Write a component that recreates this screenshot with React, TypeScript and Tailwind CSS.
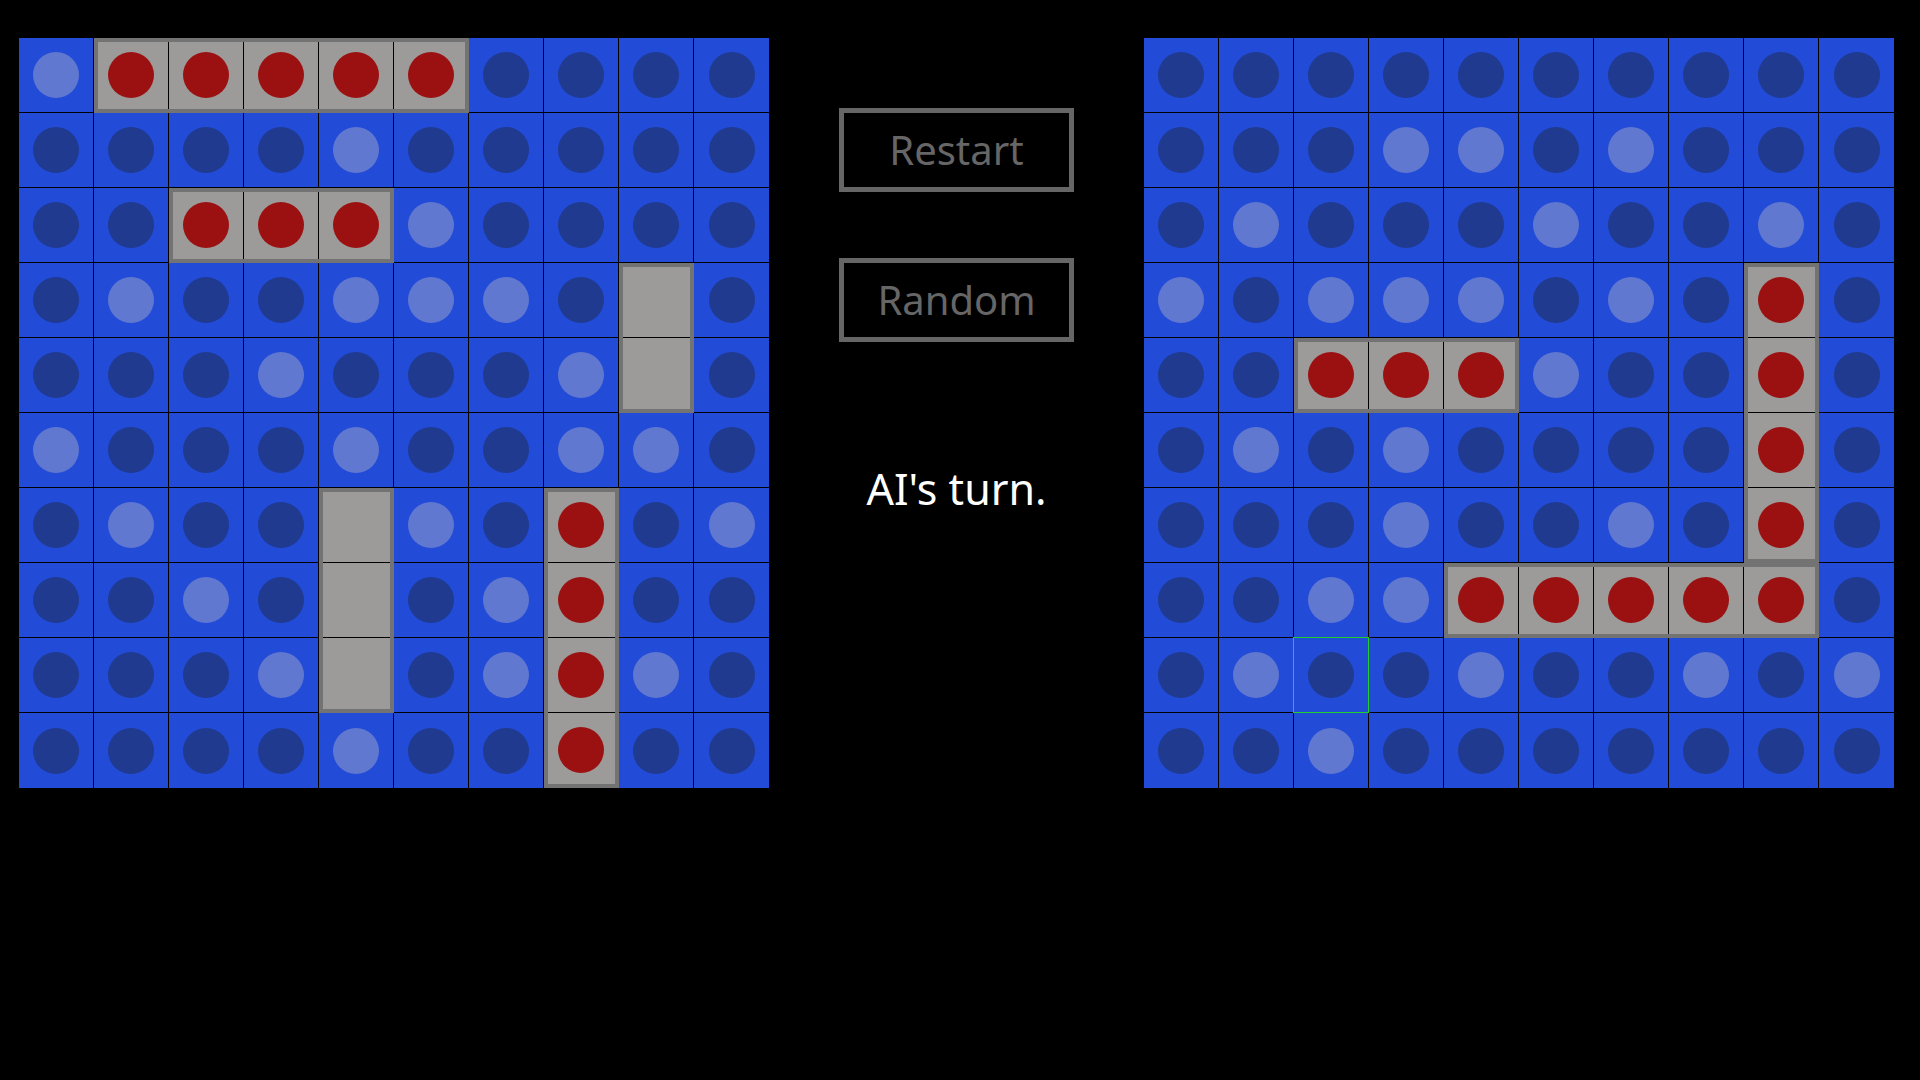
import React from "react";

type Ship = { r: number; c: number; n: number; h: boolean; hit: boolean };

const leftRows = [
  "LSSSSSDDDD",
  "DDDDLDDDDD",
  "DDSSSLDDDD",
  "DLDDLLLDSD",
  "DDDLDDDLSD",
  "LDDDLDDLLD",
  "DLDDSLDSDL",
  "DDLDSDLSDD",
  "DDDLSDLSLD",
  "DDDDLDDSDD",
];

const rightRows = [
  "DDDDDDDDDD",
  "DDDLLDLDDD",
  "DLDDDLDDLD",
  "LDLLLDLDSD",
  "DDSSSLDDSD",
  "DLDLDDDDSD",
  "DDDLDDLDSD",
  "DDLLSSSSSD",
  "DLHDLDDLDL",
  "DDLDDDDDDD",
];

const leftShips: Ship[] = [
  { r: 0, c: 1, n: 5, h: true, hit: true },
  { r: 2, c: 2, n: 3, h: true, hit: true },
  { r: 3, c: 8, n: 2, h: false, hit: false },
  { r: 6, c: 4, n: 3, h: false, hit: false },
  { r: 6, c: 7, n: 4, h: false, hit: true },
];

const rightShips: Ship[] = [
  { r: 4, c: 2, n: 3, h: true, hit: true },
  { r: 3, c: 8, n: 4, h: false, hit: true },
  { r: 7, c: 4, n: 5, h: true, hit: true },
];

function Cell({ kind }: { kind: string }) {
  const light = kind === "L";
  const hl = kind === "H";
  return (
    <div
      className={
        "bg-[#224bd8] flex items-center justify-center " +
        (hl ? "outline-1 outline-solid outline-[#22d02a]" : "")
      }
    >
      <div
        className={
          "w-[46px] h-[46px] rounded-full " +
          (light ? "bg-[#6178d0]" : "bg-[#1f3a8e]")
        }
      />
    </div>
  );
}

function ShipBox({ s }: { s: Ship }) {
  const len = s.n * 75;
  const idx = Array.from({ length: s.n }, (_, i) => i);
  return (
    <div
      className="absolute box-border border-4 border-[#737373] bg-[#9c9b99]"
      style={{
        left: s.c * 75,
        top: s.r * 75,
        width: s.h ? len : 75,
        height: s.h ? 75 : len,
      }}
    >
      {idx.slice(1).map((k) =>
        s.h ? (
          <div
            key={"l" + k}
            className="absolute top-0 bottom-0 w-px bg-black"
            style={{ left: 75 * k - 5 }}
          />
        ) : (
          <div
            key={"l" + k}
            className="absolute left-0 right-0 h-px bg-black"
            style={{ top: 75 * k - 5 }}
          />
        )
      )}
      {s.hit &&
        idx.map((k) => (
          <div
            key={"c" + k}
            className="absolute w-[46px] h-[46px] rounded-full bg-[#9b1111]"
            style={{
              left: s.h ? 75 * k + 10 : 10,
              top: s.h ? 10 : 75 * k + 10,
            }}
          />
        ))}
    </div>
  );
}

function Board({ rows, ships }: { rows: string[]; ships: Ship[] }) {
  return (
    <div className="relative w-[750px] h-[750px] shrink-0">
      <div className="grid grid-cols-[repeat(9,74px)_75px] grid-rows-[repeat(9,74px)_75px] gap-px bg-black w-[750px] h-[750px]">
        {rows.map((row, r) =>
          row.split("").map((k, c) => <Cell key={r + "-" + c} kind={k} />)
        )}
      </div>
      {ships.map((s, i) => (
        <ShipBox key={i} s={s} />
      ))}
    </div>
  );
}

export default function App() {
  return (
    <div
      className="w-[1920px] h-[1080px] bg-black overflow-hidden flex items-start pt-[38px] pl-[19px]"
      style={{ fontFamily: '"Noto Sans", "Open Sans", sans-serif' }}
    >
      <Board rows={leftRows} ships={leftShips} />
      <div className="w-[375px] shrink-0 flex flex-col items-center">
        <button className="mt-[70px] w-[235px] h-[84px] box-border border-[5px] border-[#666666] bg-black text-[#666666] text-[40px] leading-none flex items-center justify-center">
          Restart
        </button>
        <button className="mt-[66px] w-[235px] h-[84px] box-border border-[5px] border-[#666666] bg-black text-[#666666] text-[40px] leading-none flex items-center justify-center">
          Random
        </button>
        <div className="mt-[125px] text-white text-[43px] leading-[43px]">
          AI's turn.
        </div>
      </div>
      <Board rows={rightRows} ships={rightShips} />
    </div>
  );
}
